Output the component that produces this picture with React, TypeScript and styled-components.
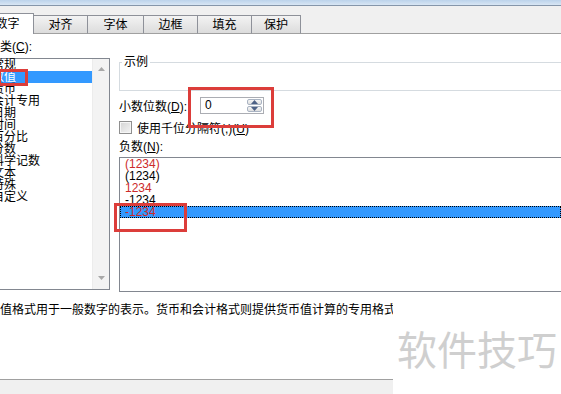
import styled, { createGlobalStyle } from 'styled-components';

const GlobalStyle = createGlobalStyle`
  html, body {
    margin: 0;
    padding: 0;
    background: #fff;
  }
  body {
    font-family: "Liberation Sans", "Noto Sans CJK SC", sans-serif;
    font-size: 12px;
    color: #000;
  }
`;

const tabs = [
  { label: '数字', w: 53, active: true },
  { label: '对齐', w: 54 },
  { label: '字体', w: 56 },
  { label: '边框', w: 54 },
  { label: '填充', w: 54 },
  { label: '保护', w: 49 },
];

const categories = ['常规', '数值', '货币', '会计专用', '日期', '时间', '百分比', '分数', '科学记数', '文本', '特殊', '自定义'];

const negatives = [
  { text: '(1234)', red: true },
  { text: '(1234)', red: false },
  { text: '1234', red: true },
  { text: '-1234', red: false },
  { text: '-1234', red: true, selected: true },
];

const marks = [
  { x: -2, y: 69, w: 30, h: 17 },
  { x: 188, y: 87, w: 86, h: 41 },
  { x: 114, y: 203, w: 73, h: 29 },
];

const App = () => {
  return (
    <>
      <GlobalStyle />
      <Screen>
        <TopEdge />
        <TabStrip>
          {tabs.map((t) => (
            <Tab key={t.label} $w={t.w} $active={!!t.active}>{t.label}</Tab>
          ))}
          <TabFill />
        </TabStrip>
        <Panel>
          <Body>
            <LeftCol>
              <FieldLabel>分类(<u>C</u>):</FieldLabel>
              <CategoryList>
                <Items>
                  {categories.map((c, i) => (
                    <CatItem key={c} $selected={i === 1}>{c}</CatItem>
                  ))}
                </Items>
                <ScrollBar>
                  <Arrow viewBox="0 0 7 4"><path d="M0 4 L3.5 0 L7 4 Z" /></Arrow>
                  <Arrow viewBox="0 0 7 4"><path d="M0 0 L3.5 4 L7 0 Z" /></Arrow>
                </ScrollBar>
              </CategoryList>
            </LeftCol>
            <RightCol>
              <ExampleBox>
                <Legend>示例</Legend>
              </ExampleBox>
              <DecimalRow>
                <RowLabel>小数位数(<u>D</u>):</RowLabel>
                <SpinBox>
                  <SpinValue>0</SpinValue>
                  <SpinButtons>
                    <SpinHalf>
                      <svg width="7" height="4" viewBox="0 0 7 4"><path d="M0 4 L3.5 0 L7 4 Z" fill="#4d6185" /></svg>
                    </SpinHalf>
                    <SpinHalf>
                      <svg width="7" height="4" viewBox="0 0 7 4"><path d="M0 0 L3.5 4 L7 0 Z" fill="#4d6185" /></svg>
                    </SpinHalf>
                  </SpinButtons>
                </SpinBox>
              </DecimalRow>
              <CheckRow>
                <CheckBox />
                <span>使用千位分隔符(,)(<u>U</u>)</span>
              </CheckRow>
              <NegLabel>负数(<u>N</u>):</NegLabel>
              <NegList>
                {negatives.map((n, i) => (
                  <NegItem key={i} $red={n.red} $selected={!!n.selected}>{n.text}</NegItem>
                ))}
              </NegList>
            </RightCol>
          </Body>
          <Description>数值格式用于一般数字的表示。货币和会计格式则提供货币值计算的专用格式</Description>
          <Spacer />
          <Footer />
        </Panel>
        {marks.map((m, i) => (
          <Mark key={i} $x={m.x} $y={m.y} $w={m.w} $h={m.h} />
        ))}
        <Watermark>软件技巧</Watermark>
      </Screen>
    </>
  );
};

const Screen = styled.div`
  position: relative;
  width: 561px;
  height: 394px;
  overflow: hidden;
  display: flex;
  flex-direction: column;
  background: #fff;
`;

const TopEdge = styled.div`
  height: 5px;
  flex: none;
  background: linear-gradient(#bcd3eb, #d8e6f4);
  border-bottom: 1px solid #8596aa;
`;

const TabStrip = styled.div`
  display: flex;
  align-items: flex-end;
  flex: none;
  height: 28px;
  margin-left: -19px;
  background: #f0f0f0;
`;

const Tab = styled.div<{ $w: number; $active: boolean }>`
  box-sizing: border-box;
  flex: none;
  width: ${(p) => p.$w}px;
  height: ${(p) => (p.$active ? 21 : 19)}px;
  display: flex;
  align-items: center;
  justify-content: center;
  border: 1px solid #8e9199;
  border-left: ${(p) => (p.$active ? '1px solid #8e9199' : 'none')};
  border-bottom: ${(p) => (p.$active ? 'none' : '1px solid #a0a0a0')};
  background: ${(p) => (p.$active ? '#fff' : 'linear-gradient(#f3f3f3, #dcdcdc)')};
  line-height: 12px;
`;

const TabFill = styled.div`
  flex: 1;
  align-self: stretch;
  box-sizing: border-box;
  border-bottom: 1px solid #a0a0a0;
`;

const Panel = styled.div`
  flex: 1;
  display: flex;
  flex-direction: column;
  margin-left: -13px;
  padding-top: 7px;
  background: #fff;
`;

const Body = styled.div`
  display: flex;
  gap: 9px;
`;

const LeftCol = styled.div`
  width: 123px;
  flex: none;
  display: flex;
  flex-direction: column;
`;

const FieldLabel = styled.div`
  height: 12px;
  line-height: 12px;
  padding-left: 1px;
  white-space: nowrap;
`;

const CategoryList = styled.div`
  box-sizing: border-box;
  margin-top: 5px;
  height: 232px;
  border: 1px solid #828790;
  display: flex;
`;

const Items = styled.div`
  flex: 1;
  display: flex;
  flex-direction: column;
`;

const CatItem = styled.div<{ $selected: boolean }>`
  height: 12px;
  line-height: 12px;
  padding-left: 4px;
  white-space: nowrap;
  color: ${(p) => (p.$selected ? '#fff' : '#000')};
  background: ${(p) => (p.$selected ? '#3399ff' : 'transparent')};
`;

const ScrollBar = styled.div`
  width: 17px;
  flex: none;
  display: flex;
  flex-direction: column;
  justify-content: space-between;
  align-items: center;
  padding: 8px 0 9px;
  box-sizing: border-box;
  background: #f3f3f3;
  border-left: 1px solid #ececec;
`;

const Arrow = styled.svg`
  width: 7px;
  height: 4px;
  fill: #a8a8a8;
`;

const RightCol = styled.div`
  width: 444px;
  flex: none;
  display: flex;
  flex-direction: column;
`;

const ExampleBox = styled.fieldset`
  box-sizing: border-box;
  margin: 15px 0 0;
  padding: 0 0 0 2px;
  height: 35px;
  min-width: 0;
  border: 1px solid #d5dbe0;
`;

const Legend = styled.legend`
  padding: 0 2px;
  line-height: 12px;
  font-size: 12px;
`;

const DecimalRow = styled.div`
  margin-top: 6px;
  height: 17px;
  display: flex;
  align-items: center;
`;

const RowLabel = styled.span`
  width: 81px;
  flex: none;
  white-space: nowrap;
`;

const SpinBox = styled.div`
  box-sizing: border-box;
  width: 64px;
  height: 17px;
  display: flex;
  border: 1px solid #abadb3;
  background: #fff;
`;

const SpinValue = styled.span`
  flex: 1;
  padding-left: 4px;
  line-height: 15px;
`;

const SpinButtons = styled.div`
  width: 15px;
  display: flex;
  flex-direction: column;
  gap: 1px;
  padding: 1px 1px 1px 0;
`;

const SpinHalf = styled.div`
  flex: 1;
  display: flex;
  align-items: center;
  justify-content: center;
  border: 1px solid #a9b3c2;
  border-radius: 2px;
  background: linear-gradient(#f6f6f6, #dedede);
`;

const CheckRow = styled.div`
  margin-top: 7px;
  height: 13px;
  display: flex;
  align-items: center;
  gap: 5px;
  white-space: nowrap;
`;

const CheckBox = styled.span`
  box-sizing: border-box;
  width: 13px;
  height: 13px;
  flex: none;
  border: 1px solid #8f8f8f;
  background: linear-gradient(135deg, #d4d4d4, #f4f4f4);
  box-shadow: inset 0 0 0 1px #f6f6f6;
`;

const NegLabel = styled.div`
  margin-top: 7px;
  height: 12px;
  line-height: 12px;
`;

const NegList = styled.div`
  box-sizing: border-box;
  margin-top: 4px;
  height: 135px;
  border: 1px solid #828790;
  display: flex;
  flex-direction: column;
`;

const NegItem = styled.div<{ $red: boolean; $selected: boolean }>`
  height: 12px;
  line-height: 12px;
  padding-left: 5px;
  margin-right: 1px;
  color: ${(p) => (p.$red ? '#cc2a2a' : '#000')};
  background: ${(p) => (p.$selected ? '#3399ff' : 'transparent')};
  outline: ${(p) => (p.$selected ? '1px dotted #000' : 'none')};
  outline-offset: -1px;
`;

const Description = styled.div`
  margin-top: 12px;
  padding-left: 1px;
  height: 12px;
  line-height: 12px;
  white-space: nowrap;
`;

const Spacer = styled.div`
  flex: 1;
`;

const Footer = styled.div`
  height: 15px;
  box-sizing: border-box;
  border-top: 1px solid #a0a0a0;
  background: #f0f0f0;
`;

const Mark = styled.div<{ $x: number; $y: number; $w: number; $h: number }>`
  position: absolute;
  left: ${(p) => p.$x}px;
  top: ${(p) => p.$y}px;
  width: ${(p) => p.$w}px;
  height: ${(p) => p.$h}px;
  box-sizing: border-box;
  border: 3px solid #dc3d3a;
`;

const Watermark = styled.div`
  position: absolute;
  right: 0;
  bottom: 0;
  width: 168px;
  height: 92px;
  display: flex;
  align-items: center;
  justify-content: center;
  background: #fff;
  color: #cfcfcf;
  font-family: "Noto Sans CJK SC", sans-serif;
  font-size: 40px;
  line-height: 40px;
`;

export default App;
